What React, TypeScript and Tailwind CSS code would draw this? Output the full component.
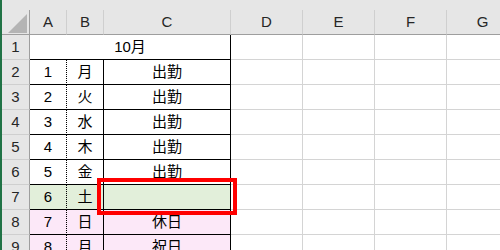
import React from "react";

const days = ["月", "火", "水", "木", "金", "土", "日", "月"];
const status = ["出勤", "出勤", "出勤", "出勤", "出勤", "", "休日", "祝日"];
const cols = ["A", "B", "C", "D", "E", "F", "G"];

function fillFor(row: number) {
  if (row === 7) return "bg-[#e2efda]";
  if (row >= 8) return "bg-[#fce8f8]";
  return "bg-white";
}

function Corner() {
  return (
    <div className="relative bg-[#e6e6e6] border-r border-b border-r-[#9e9e9e] border-b-[#9e9e9e]">
      <svg className="absolute left-[6px] top-[4px]" width="19" height="19" viewBox="0 0 19 19">
        <polygon points="19,0 19,19 0,19" fill="#b4b4b4" />
      </svg>
    </div>
  );
}

export default function App() {
  return (
    <div
      className="relative flex w-[500px] h-[250px] overflow-hidden bg-[#e6e6e6] text-[15px] text-black"
      style={{ fontFamily: '"Liberation Sans", "Noto Sans CJK JP", sans-serif' }}
    >
      <div className="w-[2px] shrink-0 bg-[#217346]" />
      <div className="flex flex-col">
        <div className="h-[10px] shrink-0" />
        <div className="shrink-0 grid grid-cols-[28px_37px_37px_127px_72px_72px_72px_72px] auto-rows-[25px]">
          {/* column headers */}
          <Corner />
          {cols.map((c) => (
            <div
              key={c}
              className="flex items-center justify-center bg-[#e6e6e6] border-r border-b border-r-[#cfcfcf] border-b-[#9e9e9e] text-[#262626]"
            >
              {c}
            </div>
          ))}

          {/* row 1: merged title */}
          <div className="flex items-center justify-center bg-[#e6e6e6] border-r border-b border-r-[#9e9e9e] border-b-[#cfcfcf] text-[#262626]">
            1
          </div>
          <div className="col-span-3 flex items-center justify-center bg-white border-r border-b border-black">
            10月
          </div>
          {[0, 1, 2, 3].map((i) => (
            <div key={i} className="bg-white border-r border-b border-[#d4d4d4]" />
          ))}

          {/* rows 2-9 */}
          {days.map((d, i) => {
            const row = i + 2;
            const fill = fillFor(row);
            return (
              <React.Fragment key={row}>
                <div className="flex items-center justify-center bg-[#e6e6e6] border-r border-b border-r-[#9e9e9e] border-b-[#cfcfcf] text-[#262626]">
                  {row}
                </div>
                <div className={`flex items-center justify-center ${fill} border-r border-b border-black [border-right-style:dotted]`}>
                  {i + 1}
                </div>
                <div className={`flex items-center justify-center ${fill} border-r border-b border-black`}>
                  {d}
                </div>
                <div className={`flex items-center justify-center ${fill} border-r border-b border-black`}>
                  {status[i]}
                </div>
                {[0, 1, 2, 3].map((k) => (
                  <div key={k} className="bg-white border-r border-b border-[#d4d4d4]" />
                ))}
              </React.Fragment>
            );
          })}
        </div>
      </div>

      {/* highlight around C7 */}
      <div className="absolute left-[97px] top-[178px] w-[140px] h-[37px] border-4 border-[#ff0000]" />
    </div>
  );
}
